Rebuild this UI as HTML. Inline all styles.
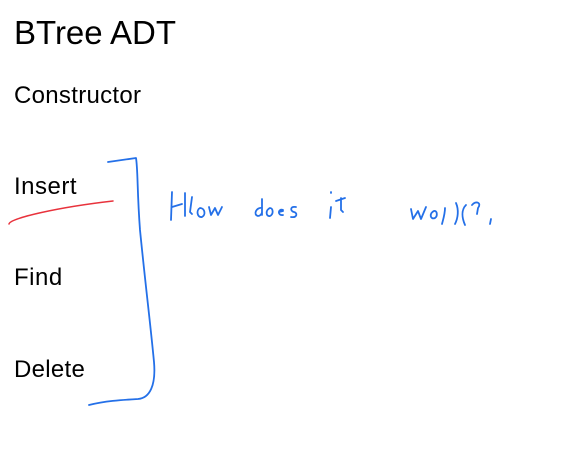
<!DOCTYPE html>
<html><head><style>
body{margin:0;width:585px;height:449px;background:#fff;position:relative;overflow:hidden;font-family:"Liberation Sans",sans-serif;color:#000}
.t{position:absolute;left:14px;white-space:nowrap}
svg{position:absolute;left:0;top:0}
</style></head><body>
<div class="t" style="top:14px;font-size:33px">BTree ADT</div>
<div class="t" style="top:82px;font-size:24px;letter-spacing:0.3px">Constructor</div>
<div class="t" style="top:173px;font-size:24px;letter-spacing:0.5px">Insert</div>
<div class="t" style="top:264px;font-size:24px;letter-spacing:0.5px">Find</div>
<div class="t" style="top:356px;font-size:24px;letter-spacing:0.3px">Delete</div>
<svg width="585" height="449" fill="none" stroke-linecap="round" stroke-linejoin="round">
<path d="M9,224 C10,218 60,207 113,201" stroke="#e8323c" stroke-width="1.5"/>
<g stroke="#2470e8" stroke-width="1.8">
<path d="M108,162 L136,158 C138,170 137,190 140,230 C146,290 150,320 154,362 C156,385 150,398 138,399 C120,400 105,401 89,405"/>
<path d="M172,192 L171,220 M172,207 L182,204 M185,193 L185,216 M192,197 L190,212 L192,214"/>
<path d="M200,208 C196,210 197,218 202,217 C206,215 205,208 200,208 M209,207 L211,215 L215,208 L218,215 L222,207"/>
<path d="M262,199 L262,215 M262,208 C256,207 253,215 258,216 C260,216 262,214 262,212 M270,208 C265,210 266,217 270,216 C274,214 273,208 270,208 M283,210 C278,208 277,216 283,215 M279,212 L283,211 M296,207 C290,206 290,211 294,212 C298,213 297,218 291,217"/>
<path d="M331,192 L331,193 M331,207 L330,218 M336,201 L345,198 M341,198 L341,210 L343,212"/>
<path d="M411,209 L413,219 L418,211 L421,219 L426,207 M434,211 C429,213 430,220 435,218 C438,216 437,210 434,211 M445,208 C445,214 443,220 442,224 M456,203 C459,210 458,218 455,224 M466,205 C461,210 462,218 465,225 M472,205 C476,200 482,203 478,208 L477,214 M491,219 L490,224"/>
</g>
</svg>
</body></html>
